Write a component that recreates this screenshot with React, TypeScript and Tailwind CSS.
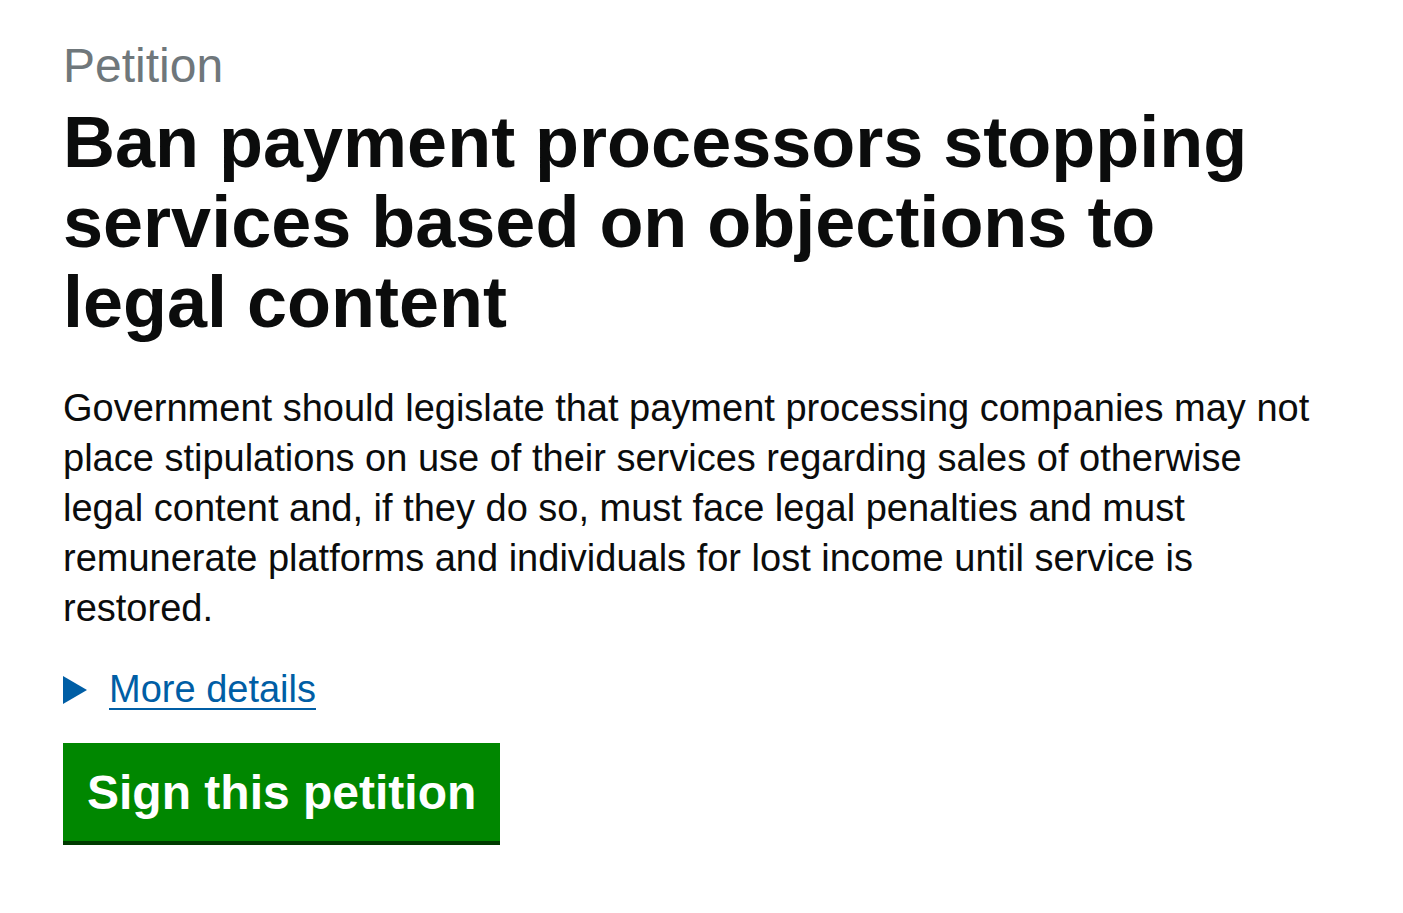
const Petition = () => {
  return (
    <div className="min-h-screen w-full bg-white font-['Liberation_Sans',Arial,sans-serif] text-[#0b0c0c]">
      <main className="px-[63px] pt-[36px]">
        <span className="block text-[48px] leading-[60px] text-[#6f777b]">Petition</span>
        <h1 className="mt-[6px] max-w-[1250px] text-[72px] font-bold leading-[80px]">
          Ban payment processors stopping services based on objections to legal content
        </h1>

        <p className="mt-[41px] max-w-[1260px] text-[38px] leading-[50px]">
          Government should legislate that payment processing companies may not place stipulations on use of
          their services regarding sales of otherwise legal content and, if they do so, must face legal penalties
          and must remunerate platforms and individuals for lost income until service is restored.
        </p>

        <div className="mt-[31px] flex items-center text-[38px] leading-[50px]">
          <svg width="24" height="28" viewBox="0 0 24 28" className="mr-[22px] mt-[2px]">
            <polygon points="0,0 24,14 0,28" fill="#005ea5" />
          </svg>
          <a
            href="#"
            className="text-[#005ea5] underline decoration-[2px] underline-offset-[6px]"
          >
            More details
          </a>
        </div>

        <button className="mt-[29px] bg-[#008700] px-[24px] pt-[20px] pb-[18px] text-[48px] font-bold leading-[60px] text-white shadow-[0_4px_0_#003b00]">
          Sign this petition
        </button>
      </main>
    </div>
  );
};

export default function App() {
  return <Petition />;
}
